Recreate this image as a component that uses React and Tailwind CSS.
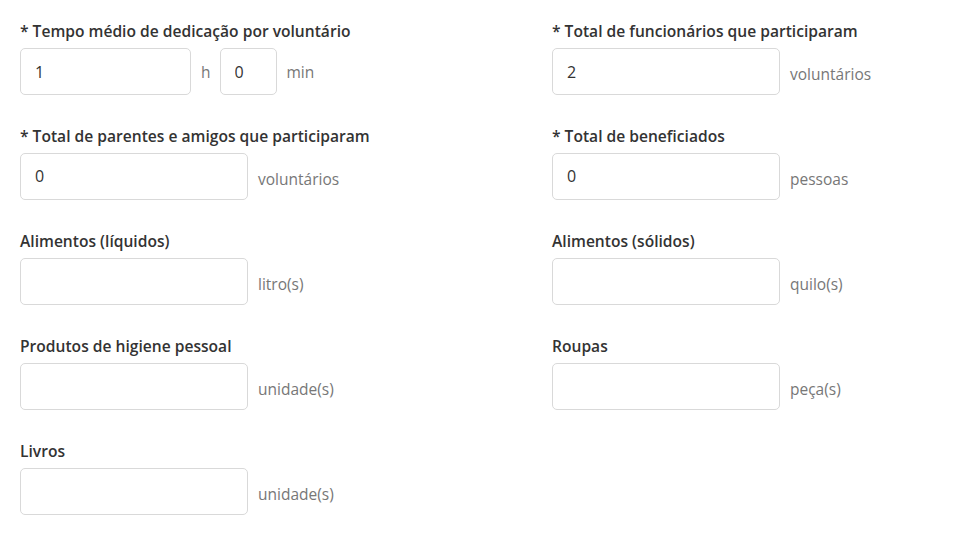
import React from "react";

const Field = ({ label, value = "", unit, inputW = "w-[228px]" }) => (
  <div className="flex flex-col">
    <label className="text-[15.6px] font-semibold text-[#333] leading-[20px] mb-[7px]">
      {label}
    </label>
    <div className="flex items-center">
      <input
        type="text"
        defaultValue={value}
        className={`${inputW} h-[47px] px-[14px] border border-[#d9d9d9] rounded-[5px] text-[16px] text-[#333] bg-white outline-none`}
      />
      <span className="ml-[10px] mt-[7px] text-[15.5px] text-[#777]">{unit}</span>
    </div>
  </div>
);

const App = () => {
  return (
    <div
      className="w-[975px] h-[539px] bg-white pt-[21px] pl-[20px]"
      style={{ fontFamily: '"Open Sans", "Noto Sans", sans-serif' }}
    >
      <div className="grid grid-cols-[532px_1fr] gap-y-[30.9px]">
        {/* Tempo médio */}
        <div className="flex flex-col">
          <label className="text-[15.6px] font-semibold text-[#333] leading-[20px] mb-[7px]">
            * Tempo médio de dedicação por voluntário
          </label>
          <div className="flex items-center">
            <input
              type="text"
              defaultValue="1"
              className="w-[171px] h-[47px] px-[14px] border border-[#d9d9d9] rounded-[5px] text-[16px] text-[#333] bg-white outline-none"
            />
            <span className="ml-[10px] mr-[9px] mt-[2px] text-[15.5px] text-[#777]">h</span>
            <input
              type="text"
              defaultValue="0"
              className="w-[57px] h-[47px] px-[14px] border border-[#d9d9d9] rounded-[5px] text-[16px] text-[#333] bg-white outline-none"
            />
            <span className="ml-[10px] mt-[2px] text-[15.5px] text-[#777]">min</span>
          </div>
        </div>
        <Field label="* Total de funcionários que participaram" value="2" unit="voluntários" />

        <Field label="* Total de parentes e amigos que participaram" value="0" unit="voluntários" />
        <Field label="* Total de beneficiados" value="0" unit="pessoas" />

        <Field label="Alimentos (líquidos)" unit="litro(s)" />
        <Field label="Alimentos (sólidos)" unit="quilo(s)" />

        <Field label="Produtos de higiene pessoal" unit="unidade(s)" />
        <Field label="Roupas" unit="peça(s)" />

        <Field label="Livros" unit="unidade(s)" />
      </div>
    </div>
  );
};

export default App;
